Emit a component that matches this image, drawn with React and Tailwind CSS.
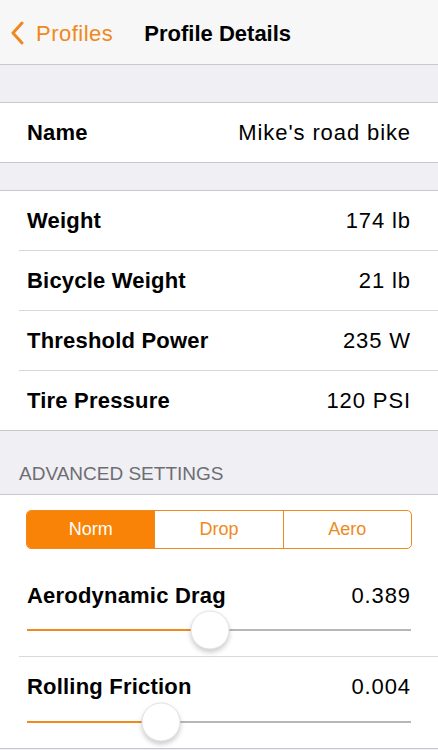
const rows = [
  { label: "Weight", value: "174 lb" },
  { label: "Bicycle Weight", value: "21 lb" },
  { label: "Threshold Power", value: "235 W" },
  { label: "Tire Pressure", value: "120 PSI" },
];

const Slider = ({ pct }) => (
  <div className="relative h-10 mx-[27px]">
    <div className="absolute left-0 right-0 top-1/2 h-[2px] -translate-y-1/2 bg-[#b7b7b7]" />
    <div
      className="absolute left-0 top-1/2 h-[2px] -translate-y-1/2 bg-[#f08a1c]"
      style={{ width: `${pct}%` }}
    />
    <div
      className="absolute top-1/2 w-[39px] h-[39px] -translate-x-1/2 -translate-y-1/2 rounded-full bg-white border border-[#e2e2e2] shadow-[0_3px_5px_rgba(0,0,0,0.2)]"
      style={{ left: `${pct}%` }}
    />
  </div>
);

const App = () => {
  return (
    <div
      className="w-[438px] h-[750px] overflow-hidden bg-[#efeff4]"
      style={{ fontFamily: '"Liberation Sans", Arial, sans-serif' }}
    >
      {/* NAV BAR */}
      <div className="h-[65px] bg-[#f7f7f7] border-b border-[#c8c7cc] flex items-center pt-[2px]">
        <div className="flex items-center pl-[10px]">
          <svg width="14" height="24" viewBox="0 0 14 24" fill="none">
            <path d="M12 2 L3 12 L12 22" stroke="#f0891d" strokeWidth="3" strokeLinecap="round" strokeLinejoin="round" />
          </svg>
          <span className="ml-[12px] text-[22px] tracking-[0.5px] text-[#f0891d]">Profiles</span>
        </div>
        <span className="ml-[31px] text-[22px] font-bold text-black">Profile Details</span>
      </div>

      {/* NAME */}
      <div className="h-[37px]" />
      <div className="bg-white border-y border-[#c8c7cc] h-[61px] flex items-center justify-between px-[27px] text-[22px] leading-none">
        <span className="font-bold tracking-[0.2px] text-black">Name</span>
        <span className="tracking-[0.9px] text-black">Mike's road bike</span>
      </div>

      {/* BODY STATS */}
      <div className="h-[27px]" />
      <div className="bg-white border-y border-[#c8c7cc]">
        {rows.map((r, i) => (
          <div key={r.label} className={i > 0 ? "ml-[19px] border-t border-[#d9d9dc]" : "ml-[19px]"}>
            <div className="h-[59px] flex items-center justify-between pl-[8px] pr-[27px] text-[22px] leading-none">
              <span className="font-bold tracking-[0.2px] text-black">{r.label}</span>
              <span className="tracking-[0.9px] text-black">{r.value}</span>
            </div>
          </div>
        ))}
      </div>

      {/* ADVANCED */}
      <div className="h-[63px] flex items-end pb-[11px] pl-[19px] text-[19px] leading-none text-[#6d6d72]">
        ADVANCED SETTINGS
      </div>
      <div className="bg-white border-t border-[#c8c7cc] pt-[15px]">
        <div className="mx-[26px] h-[39px] flex border border-[#f0891d] rounded-[5px] overflow-hidden text-[18px]">
          <div className="flex-1 flex items-center justify-center bg-[#f98307] text-white">Norm</div>
          <div className="flex-1 flex items-center justify-center border-l border-[#f0891d] text-[#f0891d]">Drop</div>
          <div className="flex-1 flex items-center justify-center border-l border-[#f0891d] text-[#f0891d]">Aero</div>
        </div>

        <div className="mt-[32px] h-[29px] flex items-center justify-between px-[27px] text-[22px] leading-none">
          <span className="font-bold tracking-[0.2px] text-black">Aerodynamic Drag</span>
          <span className="tracking-[0.9px] text-black">0.389</span>
        </div>
        <Slider pct={47.6} />
        <div className="ml-[19px] border-t border-[#d9d9dc] mt-[6px]" />

        <div className="mt-[15px] h-[30px] flex items-center justify-between px-[27px] text-[22px] leading-none">
          <span className="font-bold tracking-[0.2px] text-black">Rolling Friction</span>
          <span className="tracking-[0.9px] text-black">0.004</span>
        </div>
        <Slider pct={34.9} />
        <div className="border-t border-[#c8c7cc] mt-[6px]" />
      </div>
    </div>
  );
};

export default App;
